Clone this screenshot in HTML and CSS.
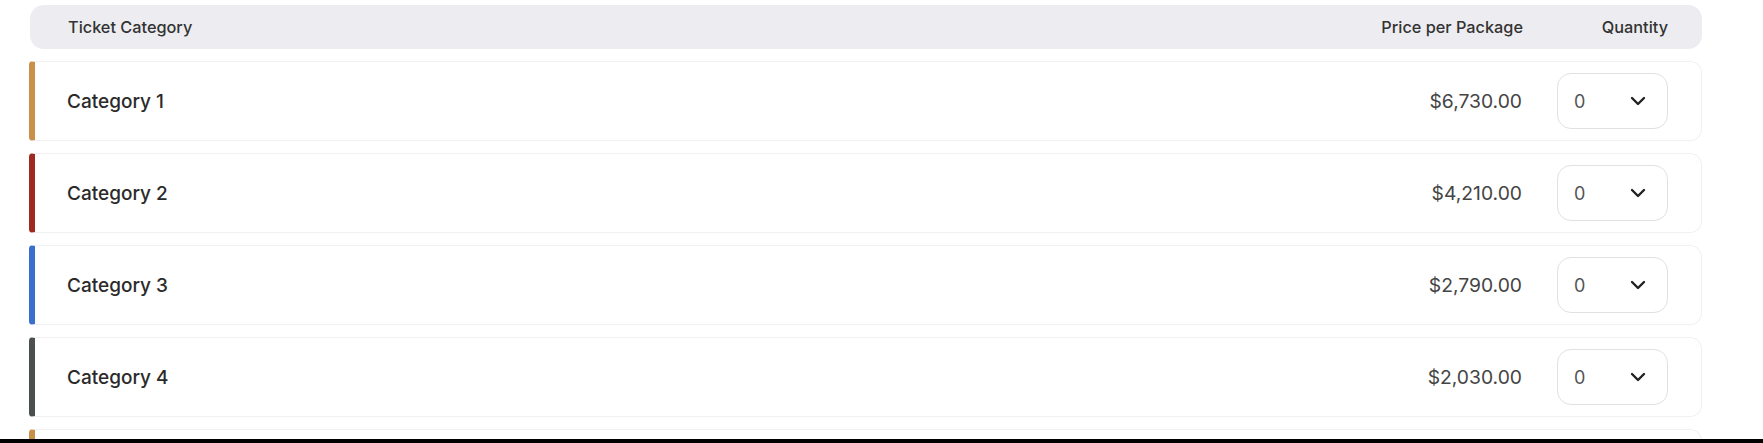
FILE: index.html
```html
<!DOCTYPE html>
<html lang="en">
<head>
<meta charset="utf-8">
<title>Tickets</title>
<link rel="stylesheet" href="styles.css">
</head>
<body>
<div class="viewport">
  <div class="table">
    <div class="head">
      <span class="head-cat">Ticket Category</span>
      <span class="head-price">Price per Package</span>
      <span class="head-qty">Quantity</span>
    </div>
    <div class="row c1">
      <span class="cat">Category 1</span>
      <span class="price">$6,730.00</span>
      <div class="select"><span class="val">0</span><svg class="chev" viewBox="0 0 16 10" width="16" height="10"><path d="M2 2l6 6 6-6" fill="none" stroke="#222" stroke-width="2.4" stroke-linecap="round" stroke-linejoin="round"/></svg></div>
    </div>
    <div class="row c2">
      <span class="cat">Category 2</span>
      <span class="price">$4,210.00</span>
      <div class="select"><span class="val">0</span><svg class="chev" viewBox="0 0 16 10" width="16" height="10"><path d="M2 2l6 6 6-6" fill="none" stroke="#222" stroke-width="2.4" stroke-linecap="round" stroke-linejoin="round"/></svg></div>
    </div>
    <div class="row c3">
      <span class="cat">Category 3</span>
      <span class="price">$2,790.00</span>
      <div class="select"><span class="val">0</span><svg class="chev" viewBox="0 0 16 10" width="16" height="10"><path d="M2 2l6 6 6-6" fill="none" stroke="#222" stroke-width="2.4" stroke-linecap="round" stroke-linejoin="round"/></svg></div>
    </div>
    <div class="row c4">
      <span class="cat">Category 4</span>
      <span class="price">$2,030.00</span>
      <div class="select"><span class="val">0</span><svg class="chev" viewBox="0 0 16 10" width="16" height="10"><path d="M2 2l6 6 6-6" fill="none" stroke="#222" stroke-width="2.4" stroke-linecap="round" stroke-linejoin="round"/></svg></div>
    </div>
    <div class="row c5"></div>
  </div>
</div>
<div class="edge"></div>
</body>
</html>
```
FILE: styles.css
```css
html, body {
  margin: 0;
  padding: 0;
  background: #ffffff;
}
body {
  font-family: Inter, "Noto Sans", "Liberation Sans", sans-serif;
  color: #2b2b2b;
  height: 443px;
  overflow: hidden;
  display: flex;
  flex-direction: column;
}
.viewport {
  height: 439px;
  overflow: hidden;
  flex: none;
}
.edge {
  height: 4px;
  background: #000;
  flex: none;
}
.table {
  width: 1673px;
  padding: 5px 0 0 29px;
  display: flex;
  flex-direction: column;
  gap: 12px;
}
.head {
  margin-left: 1px;
  height: 44px;
  background: #ededf1;
  border-radius: 14px;
  display: flex;
  align-items: center;
  padding: 0 34px 0 38px;
  font-size: 16.3px;
  font-weight: 450;
  color: #333;
}
.head-cat { flex: 1; }
.head-price { text-align: right; }
.head-qty { width: 111px; margin-left: 34px; text-align: right; }

.row {
  height: 80px;
  box-sizing: border-box;
  border: 1px solid #f1f1f3;
  border-left: 6px solid #c8904a;
  border-radius: 4px 12px 12px 4px;
  background: #fff;
  display: flex;
  align-items: center;
  padding: 0 33px 0 32px;
  flex: none;
}
.c1 { border-left-color: #c8904a; }
.c2 { border-left-color: #9e2a20; }
.c3 { border-left-color: #3a6fcf; }
.c4 { border-left-color: #4b504d; }
.c5 { border-left-color: #c8904a; }
.cat {
  flex: 1;
  font-size: 19px;
  font-weight: 500;
  color: #2a2a2a;
}
.price {
  font-size: 19.3px;
  font-weight: 400;
  color: #444;
  margin-right: 35px;
}
.select {
  width: 111px;
  height: 56px;
  box-sizing: border-box;
  border: 1px solid #e1e1e4;
  border-radius: 14px;
  display: flex;
  align-items: center;
  justify-content: space-between;
  padding: 0 21px 0 16px;
}
.val {
  font-size: 18px;
  color: #555;
}
.chev { display: block; }
```
